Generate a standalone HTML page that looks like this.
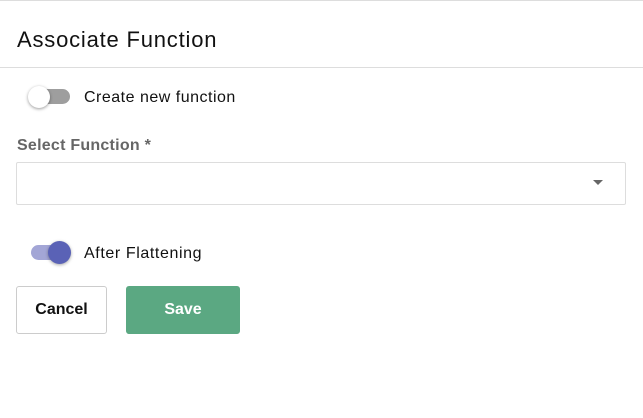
<!DOCTYPE html>
<html><head><style>
body{margin:0;width:643px;height:418px;background:#fff;font-family:"Liberation Sans",sans-serif;position:relative;overflow:hidden;color:#111}
.a{position:absolute}
</style></head><body>
<div class="a" style="left:0;top:0;width:643px;height:1px;background:#ddd"></div>
<div class="a" style="left:17px;top:27px;font-size:22px;letter-spacing:0.8px;color:#111">Associate Function</div>
<div class="a" style="left:0;top:67px;width:643px;height:1px;background:#ddd"></div>
<div class="a" style="left:32px;top:89px;width:38px;height:15px;border-radius:8px;background:#9e9e9e"></div>
<div class="a" style="left:28px;top:86px;width:22px;height:22px;border-radius:50%;background:#fff;box-shadow:0 1px 3px rgba(0,0,0,.4)"></div>
<div class="a" style="left:84px;top:89px;font-size:16px;letter-spacing:0.5px">Create new function</div>
<div class="a" style="left:17px;top:137px;font-size:16px;letter-spacing:0.25px;font-weight:bold;color:#666">Select Function *</div>
<div class="a" style="left:16px;top:162px;width:608px;height:41px;border:1px solid #ddd;border-radius:2px"></div>
<div class="a" style="left:593px;top:180px;width:0;height:0;border-left:5px solid transparent;border-right:5px solid transparent;border-top:5px solid #666"></div>
<div class="a" style="left:31px;top:245px;width:38px;height:15px;border-radius:8px;background:#a3a6d6"></div>
<div class="a" style="left:48px;top:241px;width:23px;height:23px;border-radius:50%;background:#5a62b6;box-shadow:0 1px 3px rgba(0,0,0,.35)"></div>
<div class="a" style="left:84px;top:245px;font-size:16px;letter-spacing:0.6px">After Flattening</div>
<div class="a" style="left:16px;top:286px;width:89px;height:46px;border:1px solid #ccc;border-radius:3px;text-align:center;line-height:46px;font-weight:bold;font-size:16px">Cancel</div>
<div class="a" style="left:126px;top:286px;width:114px;height:48px;background:#5ba882;border-radius:3px;text-align:center;line-height:47px;font-weight:bold;font-size:16px;color:#fff">Save</div>
</body></html>
